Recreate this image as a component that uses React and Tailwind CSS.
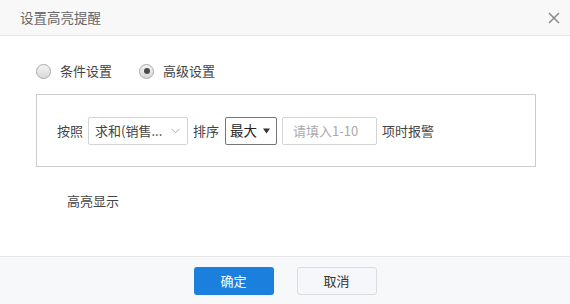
import React, { useState } from 'react';

const Radio = ({ checked, label, onClick }) => (
	<label onClick={onClick} className="flex items-center cursor-pointer">
		<span className="flex items-center justify-center w-[15px] h-[15px] rounded-full border border-[#a9a9a9] bg-gradient-to-b from-[#f4f4f4] to-[#d8d8d8]">
			{checked && <span className="w-[6px] h-[6px] rounded-full bg-[#4a4a4a]" />}
		</span>
		<span className="ml-[9px] text-[13px] text-[#444]">{label}</span>
	</label>
);

const App = () => {
	const [mode, setMode] = useState('advanced');

	return (
		<div
			className="w-[570px] h-[304px] bg-white flex flex-col"
			style={{ fontFamily: '"Noto Sans CJK SC", "Noto Sans", sans-serif' }}
		>
			{/* Header */}
			<div className="h-[36px] flex items-center justify-between pl-[20px] pr-[9px] bg-[#f8f8f8] border-b border-[#e6e6e6]">
				<span className="text-[13.5px] text-[#666]">设置高亮提醒</span>
				<button className="w-[14px] h-[14px] flex items-center justify-center">
					<svg width="12" height="12" viewBox="0 0 12 12">
						<path d="M1 1 L11 11 M11 1 L1 11" stroke="#888" strokeWidth="1.5" />
					</svg>
				</button>
			</div>

			{/* Body */}
			<div className="flex-1 px-[36px] flex flex-col">
				<div className="mt-[25px] h-[20px] flex items-center gap-[27px]">
					<Radio checked={mode === 'condition'} label="条件设置" onClick={() => setMode('condition')} />
					<Radio checked={mode === 'advanced'} label="高级设置" onClick={() => setMode('advanced')} />
				</div>

				<div className="mt-[13px] w-[500px] h-[73px] border border-[#cccccc] flex items-center pl-[20px] text-[13px] text-[#444]">
					<span>按照</span>
					<div className="ml-[5px] w-[100px] h-[28px] border border-[#d4d4d4] rounded-[2px] flex items-center justify-between pl-[6px] pr-[7px]">
						<span className="truncate">求和(销售...</span>
						<svg width="9" height="6" viewBox="0 0 9 6">
							<path d="M0.5 0.8 L4.5 4.8 L8.5 0.8" fill="none" stroke="#aaa" strokeWidth="1" />
						</svg>
					</div>
					<span className="ml-[5px]">排序</span>
					<div className="ml-[6px] w-[52px] h-[28px] border border-[#767676] rounded-[2px] flex items-center justify-between pl-[4px] pr-[6px]">
						<span className="text-[13.5px] text-[#222]">最大</span>
						<svg width="7" height="6" viewBox="0 0 7 6">
							<path d="M0 0.5 L7 0.5 L3.5 5.5 Z" fill="#333" />
						</svg>
					</div>
					<div className="ml-[5px] w-[95px] h-[28px] border border-[#d4d4d4] rounded-[2px] flex items-center pl-[10px] text-[#aaa]">
						请填入1-10
					</div>
					<span className="ml-[5px]">项时报警</span>
				</div>

				<div className="mt-[24px] h-[20px] pl-[31px] flex items-center text-[13px] text-[#444]">高亮显示</div>
			</div>

			{/* Footer */}
			<div className="h-[48px] bg-[#f7f8fa] border-t border-[#e5e5e5] flex items-center justify-center gap-[23px]">
				<button className="w-[80px] h-[28px] rounded-[3px] bg-[#1b80dd] text-white text-[13px]">确定</button>
				<button className="w-[80px] h-[28px] rounded-[3px] bg-[#f5f7fa] border border-[#dcdcdc] text-[#333] text-[13px]">取消</button>
			</div>
		</div>
	);
};

export default App;
